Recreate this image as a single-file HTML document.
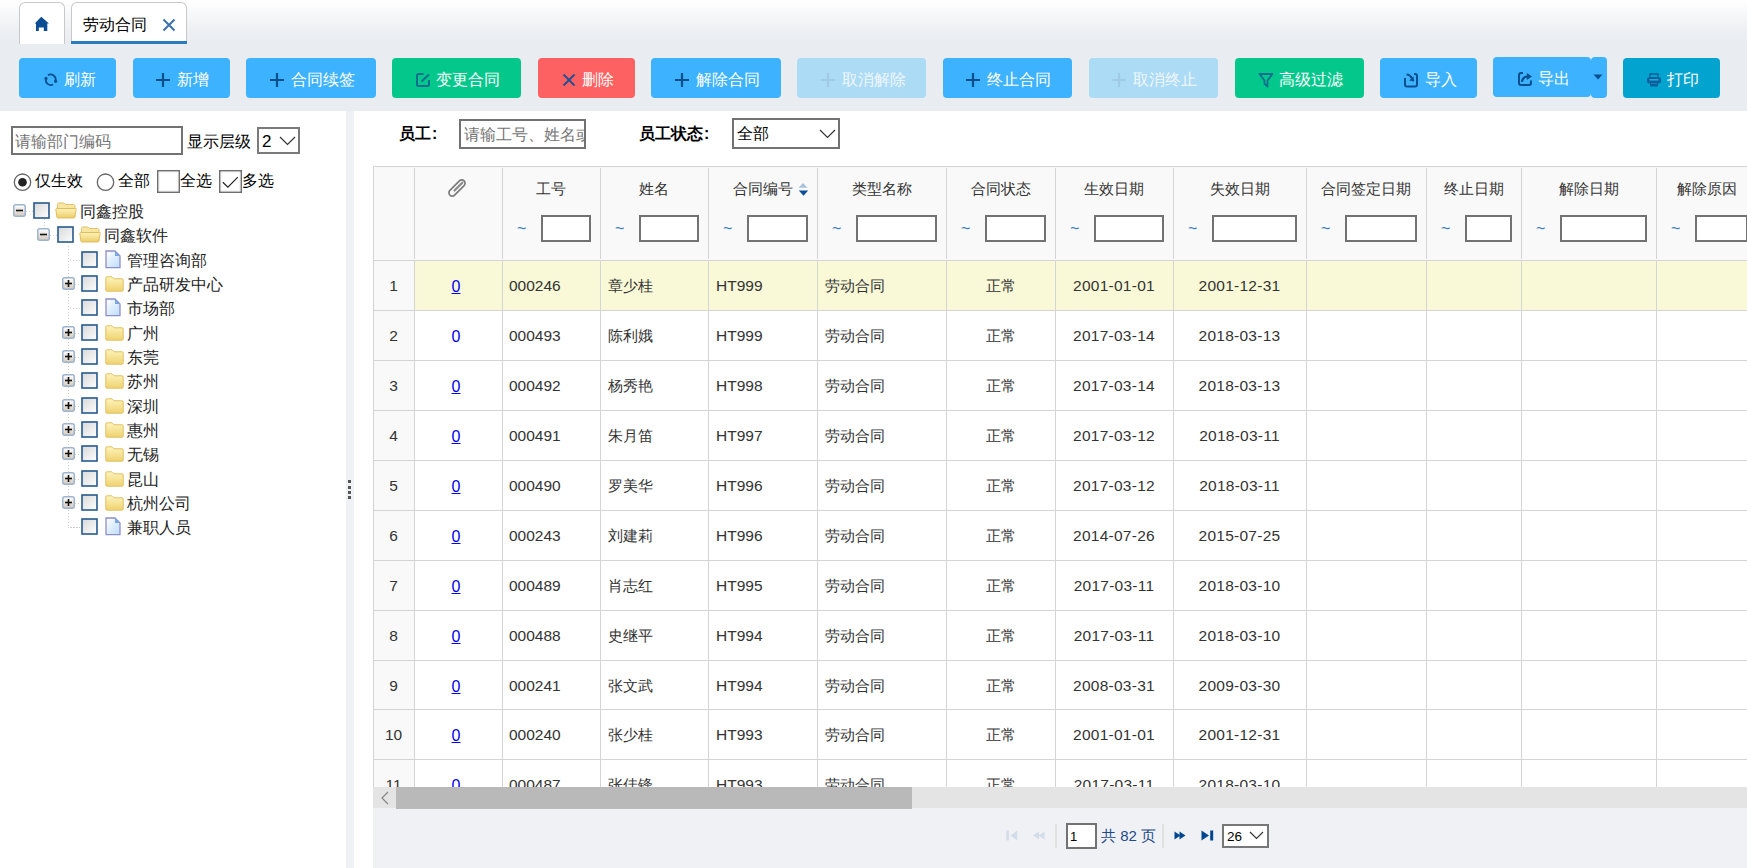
<!DOCTYPE html><html><head><meta charset="utf-8"><style>
*{box-sizing:border-box}
html,body{margin:0;padding:0}
body{width:1747px;height:868px;overflow:hidden;position:relative;background:#fff;font-family:"Liberation Sans",sans-serif;color:#333}
.a{position:absolute;white-space:nowrap}
.t16{font-size:16px;line-height:20px}
.t15{font-size:15px;line-height:20px}
.btn{position:absolute;top:58px;height:40px;border-radius:4px}
.btxt{position:absolute;top:14px;font-size:16px;line-height:20px;color:#fff;white-space:nowrap}
.bic{position:absolute;top:0}
.inp{position:absolute;border:2px solid #727272;background:#fff}
.vl{position:absolute;width:1px;background:#d4d4d4}
.hl{position:absolute;height:1px;background:#d4d4d4}
</style></head><body>

<div class="a" style="left:0;top:0;width:1747px;height:44px;background:linear-gradient(#ffffff 0%,#f7f8fa 30%,#eef0f3 65%,#e9edf1 95%)"></div>
<div class="a" style="left:0;top:44px;width:1747px;height:67px;background:#e9edf1"></div>
<div class="a" style="left:19px;top:2px;width:46px;height:42px;background:#fff;border:1px solid #c8c8c8;border-bottom:none;border-radius:6px 6px 0 0"></div>
<svg class="a" style="left:34px;top:16px" width="16" height="16" viewBox="0 0 16 16"><path d="M7.3 0.7 L0.7 7.5 L2 7.5 L2 14.9 L4.8 14.9 L4.8 11.6 L9.8 11.6 L9.8 14.9 L13.3 14.9 L13.3 7.5 L14.9 7.5 Z" fill="#0a4d94"/></svg>
<div class="a" style="left:71px;top:2px;width:116px;height:42px;background:#fff;border:1px solid #c8c8c8;border-bottom:none;border-radius:6px 6px 0 0"></div>
<div class="a" style="left:71px;top:41px;width:116px;height:3px;background:#2b7bbf"></div>
<div class="a t16" style="left:83px;top:15px;color:#000">劳动合同</div>
<svg class="a" style="left:162px;top:18px" width="14" height="14" viewBox="0 0 14 14"><path d="M1.5 1.5 L12.5 12.5 M12.5 1.5 L1.5 12.5" stroke="#3a72b0" stroke-width="2"/></svg>
<div class="btn" style="left:19px;width:97px;top:58px;background:#3db2fe"></div>
<div class="a" style="left:43px;top:72px;width:16px;height:16px"><svg width="16" height="16" viewBox="0 0 16 16"><path d="M4.9 3.2 A5.2 5.2 0 0 1 12.6 8.9" stroke="#0c4f8e" stroke-width="1.7" fill="none"/><path d="M10.1 12.6 A5.2 5.2 0 0 1 2.9 6.6" stroke="#0c4f8e" stroke-width="1.7" fill="none"/><circle cx="12.6" cy="9.3" r="1.6" fill="#0c4f8e"/><circle cx="3" cy="6.4" r="1.6" fill="#0c4f8e"/></svg></div>
<div class="a t16" style="left:64px;top:70px;color:#fff">刷新</div>
<div class="btn" style="left:133px;width:97px;top:58px;background:#3db2fe"></div>
<div class="a" style="left:155px;top:72px;width:16px;height:16px"><svg width="16" height="16" viewBox="0 0 16 16"><path d="M8 1 V15 M1 8 H15" stroke="#0d4f8b" stroke-width="2.2"/></svg></div>
<div class="a t16" style="left:177px;top:70px;color:#fff">新增</div>
<div class="btn" style="left:246px;width:130px;top:58px;background:#3db2fe"></div>
<div class="a" style="left:269px;top:72px;width:16px;height:16px"><svg width="16" height="16" viewBox="0 0 16 16"><path d="M8 1 V15 M1 8 H15" stroke="#0d4f8b" stroke-width="2.2"/></svg></div>
<div class="a t16" style="left:291px;top:70px;color:#fff">合同续签</div>
<div class="btn" style="left:392px;width:129px;top:58px;background:#04c88b"></div>
<div class="a" style="left:415px;top:72px;width:16px;height:16px"><svg width="16" height="16" viewBox="0 0 16 16"><path d="M8.5 2 H3.5 Q2 2 2 3.5 V12.5 Q2 14 3.5 14 H12.5 Q14 14 14 12.5 V8" stroke="#0a6e8e" stroke-width="2" fill="none"/><path d="M6.5 9.5 L14 2.5" stroke="#0a6e8e" stroke-width="1.8"/></svg></div>
<div class="a t16" style="left:436px;top:70px;color:#fff">变更合同</div>
<div class="btn" style="left:538px;width:97px;top:58px;background:#fe6161"></div>
<div class="a" style="left:561px;top:72px;width:16px;height:16px"><svg width="16" height="16" viewBox="0 0 16 16"><path d="M2.5 2.5 L13.5 13.5 M13.5 2.5 L2.5 13.5" stroke="#1f4f93" stroke-width="1.8"/></svg></div>
<div class="a t16" style="left:582px;top:70px;color:#fff">删除</div>
<div class="btn" style="left:651px;width:130px;top:58px;background:#3db2fe"></div>
<div class="a" style="left:674px;top:72px;width:16px;height:16px"><svg width="16" height="16" viewBox="0 0 16 16"><path d="M8 1 V15 M1 8 H15" stroke="#0d4f8b" stroke-width="2.2"/></svg></div>
<div class="a t16" style="left:696px;top:70px;color:#fff">解除合同</div>
<div class="btn" style="left:797px;width:129px;top:58px;background:#acdbf6"></div>
<div class="a" style="left:820px;top:72px;width:16px;height:16px"><svg width="16" height="16" viewBox="0 0 16 16"><path d="M8 1 V15 M1 8 H15" stroke="#9fcbe8" stroke-width="2.2"/></svg></div>
<div class="a t16" style="left:842px;top:70px;color:#f0f7fc">取消解除</div>
<div class="btn" style="left:943px;width:129px;top:58px;background:#3db2fe"></div>
<div class="a" style="left:965px;top:72px;width:16px;height:16px"><svg width="16" height="16" viewBox="0 0 16 16"><path d="M8 1 V15 M1 8 H15" stroke="#0d4f8b" stroke-width="2.2"/></svg></div>
<div class="a t16" style="left:987px;top:70px;color:#fff">终止合同</div>
<div class="btn" style="left:1089px;width:129px;top:58px;background:#acdbf6"></div>
<div class="a" style="left:1111px;top:72px;width:16px;height:16px"><svg width="16" height="16" viewBox="0 0 16 16"><path d="M8 1 V15 M1 8 H15" stroke="#9fcbe8" stroke-width="2.2"/></svg></div>
<div class="a t16" style="left:1133px;top:70px;color:#f0f7fc">取消终止</div>
<div class="btn" style="left:1235px;width:129px;top:58px;background:#04c88b"></div>
<div class="a" style="left:1258px;top:72px;width:16px;height:16px"><svg width="16" height="16" viewBox="0 0 16 16"><path d="M1.5 2 H14.5 L9.5 8.5 V14.5 L6.5 11.5 V8.5 Z" stroke="#0b6f8f" stroke-width="1.8" fill="none" stroke-linejoin="round"/></svg></div>
<div class="a t16" style="left:1279px;top:70px;color:#fff">高级过滤</div>
<div class="btn" style="left:1380px;width:97px;top:58px;background:#3db2fe"></div>
<div class="a" style="left:1403px;top:72px;width:16px;height:16px"><svg width="16" height="16" viewBox="0 0 16 16"><path d="M2 6 V12.5 Q2 14.5 4 14.5 H12 Q14 14.5 14 12.5 V4 Q14 2 12 2 H11" stroke="#0c4f8e" stroke-width="2" fill="none"/><path d="M3.5 2.5 Q7 2.5 9 6.5" stroke="#0c4f8e" stroke-width="2.2" fill="none"/><path d="M6.2 8.5 L11.2 9.6 L10.5 4.4 Z" fill="#0c4f8e"/></svg></div>
<div class="a t16" style="left:1425px;top:70px;color:#fff">导入</div>
<div class="btn" style="left:1493px;width:98px;top:57px;background:#3db2fe"></div>
<div class="a" style="left:1517px;top:71px;width:16px;height:16px"><svg width="16" height="16" viewBox="0 0 16 16"><path d="M6 2 H4 Q2 2 2 4 V12 Q2 14 4 14 H12 Q14 14 14 12 V9.5" stroke="#0c4f8e" stroke-width="2" fill="none"/><path d="M4.8 10.8 Q6 5.5 10.5 5.5" stroke="#0c4f8e" stroke-width="2.2" fill="none"/><path d="M9.8 2 L15 5.5 L9.8 9 Z" fill="#0c4f8e"/></svg></div>
<div class="a t16" style="left:1538px;top:69px;color:#fff">导出</div>
<div class="btn" style="left:1623px;width:97px;top:58px;background:#03a3d0"></div>
<div class="a" style="left:1646px;top:72px;width:16px;height:16px"><svg width="16" height="16" viewBox="0 0 16 16"><path d="M4 4.5 V2 H12 V4.5" stroke="#07619c" stroke-width="1.6" fill="none"/><rect x="1" y="5" width="14" height="6.5" rx="2.5" fill="#07619c"/><rect x="3.5" y="7" width="9" height="1.6" fill="#2aa6d6"/><rect x="4" y="9.5" width="8" height="5" fill="#07619c"/><rect x="5" y="11" width="6" height="1" fill="#1b7db8"/></svg></div>
<div class="a t16" style="left:1667px;top:70px;color:#fff">打印</div>
<div class="a" style="left:1591px;top:57px;width:16px;height:41px;background:#3db2fe;border-radius:4px"></div>
<svg class="a" style="left:1593px;top:74px" width="10" height="6" viewBox="0 0 10 6"><path d="M0.5 0.5 H9.5 L5 5.5Z" fill="#0c4f8e"/></svg>
<div class="inp" style="left:11px;top:126px;width:172px;height:29px"></div>
<div class="a t16" style="left:15px;top:132px;color:#757575">请输部门编码</div>
<div class="a t16" style="left:187px;top:132px;color:#000">显示层级</div>
<div class="inp" style="left:257px;top:127px;width:43px;height:27px;border-color:#7a7a7a"></div>
<div class="a" style="left:262px;top:132px;font-size:17px;line-height:20px;color:#000">2</div>
<svg class="a" style="left:279px;top:135.5px" width="17" height="10" viewBox="0 0 17 10"><path d="M1 1 L8.5 8.5 L16 1" stroke="#333" stroke-width="1.2" fill="none"/></svg>
<svg class="a" style="left:13px;top:173px" width="19" height="19" viewBox="0 0 19 19"><circle cx="9.5" cy="9.2" r="8.2" fill="#fff" stroke="#666" stroke-width="1.3"/><circle cx="9.5" cy="9.2" r="4.3" fill="#222"/></svg>
<div class="a t16" style="left:35px;top:171px;color:#000">仅生效</div>
<svg class="a" style="left:95.5px;top:173px" width="19" height="19" viewBox="0 0 19 19"><circle cx="9.5" cy="9.2" r="8.2" fill="#fff" stroke="#666" stroke-width="1.3"/></svg>
<div class="a t16" style="left:118px;top:171px;color:#000">全部</div>
<svg class="a" style="left:157px;top:170px" width="23" height="23" viewBox="0 0 23 23"><rect x="0.8" y="0.8" width="21.4" height="21.4" fill="#fff" stroke="#6e6e6e" stroke-width="1.6"/><rect x="2" y="2" width="19" height="19" fill="none" stroke="#e6e6e6" stroke-width="0.8"/></svg>
<div class="a t16" style="left:180px;top:171px;color:#000">全选</div>
<svg class="a" style="left:219px;top:170px" width="23" height="23" viewBox="0 0 23 23"><rect x="0.8" y="0.8" width="21.4" height="21.4" fill="#fff" stroke="#6e6e6e" stroke-width="1.6"/><rect x="2" y="2" width="19" height="19" fill="none" stroke="#e6e6e6" stroke-width="0.8"/></svg>
<svg class="a" style="left:219px;top:170px" width="23" height="23" viewBox="0 0 23 23"><path d="M3.8 12.2 L8.9 17.2 L18.8 7.2" stroke="#222" stroke-width="1.2" fill="none"/></svg>
<div class="a t16" style="left:242px;top:171px;color:#000">多选</div>
<div class="a" style="left:44px;top:219px;width:1px;height:9px;background:repeating-linear-gradient(#cfcfcf 0 1px,transparent 1px 3px)"></div>
<div class="a" style="left:68px;top:246px;width:1px;height:282px;background:repeating-linear-gradient(#cfcfcf 0 1px,transparent 1px 3px)"></div>
<div class="a" style="left:68px;top:527px;width:12px;height:1px;background:repeating-linear-gradient(90deg,#cfcfcf 0 1px,transparent 1px 3px)"></div>
<div class="a" style="left:26px;top:211px;width:7px;height:1px;background:repeating-linear-gradient(90deg,#cfcfcf 0 1px,transparent 1px 3px)"></div>
<svg class="a" style="left:13px;top:204px" width="13" height="13" viewBox="0 0 13 13"><defs><linearGradient id="eg" x1="0" y1="0" x2="0" y2="1"><stop offset="0" stop-color="#fff"/><stop offset="1" stop-color="#d3c9bd"/></linearGradient></defs><rect x="0.75" y="0.75" width="11.5" height="11.5" rx="2" fill="url(#eg)" stroke="#9db4cf" stroke-width="1.5"/><path d="M3 6.5 H10" stroke="#111" stroke-width="1.6"/></svg>
<svg class="a" style="left:33px;top:202px" width="17" height="17" viewBox="0 0 17 17"><defs><linearGradient id="cg" x1="0" y1="0" x2="1" y2="1"><stop offset="0" stop-color="#d8d8d8"/><stop offset="1" stop-color="#fefefe"/></linearGradient></defs><rect x="1" y="1" width="15" height="15" fill="url(#cg)" stroke="#275a8c" stroke-width="1.6"/></svg>
<svg class="a" style="left:55px;top:202px" width="22" height="17" viewBox="0 0 22 17"><defs><linearGradient id="fo" x1="0" y1="0" x2="0" y2="1"><stop offset="0" stop-color="#fdf3b8"/><stop offset="1" stop-color="#eccd6a"/></linearGradient></defs><path d="M2.5 2.5 Q2.5 1 4 1 H9 L10.5 2.5 H18.5 Q20 2.5 20 4 V15 H2.5Z" fill="#f7e6a0" stroke="#e3c26c" stroke-width="1"/><path d="M0.8 7.5 Q0.8 6.5 2 6.5 H20.5 Q21.5 6.5 21.2 7.5 L19.6 15.5 Q19.4 16 18.8 16 H2.8 Q2.2 16 2 15.4Z" fill="url(#fo)" stroke="#e0bd5e" stroke-width="1"/></svg>
<div class="a t16" style="left:80px;top:202px;color:#222">同鑫控股</div>
<div class="a" style="left:50px;top:235px;width:7px;height:1px;background:repeating-linear-gradient(90deg,#cfcfcf 0 1px,transparent 1px 3px)"></div>
<svg class="a" style="left:37px;top:228px" width="13" height="13" viewBox="0 0 13 13"><defs><linearGradient id="eg" x1="0" y1="0" x2="0" y2="1"><stop offset="0" stop-color="#fff"/><stop offset="1" stop-color="#d3c9bd"/></linearGradient></defs><rect x="0.75" y="0.75" width="11.5" height="11.5" rx="2" fill="url(#eg)" stroke="#9db4cf" stroke-width="1.5"/><path d="M3 6.5 H10" stroke="#111" stroke-width="1.6"/></svg>
<svg class="a" style="left:57px;top:226px" width="17" height="17" viewBox="0 0 17 17"><defs><linearGradient id="cg" x1="0" y1="0" x2="1" y2="1"><stop offset="0" stop-color="#d8d8d8"/><stop offset="1" stop-color="#fefefe"/></linearGradient></defs><rect x="1" y="1" width="15" height="15" fill="url(#cg)" stroke="#275a8c" stroke-width="1.6"/></svg>
<svg class="a" style="left:79px;top:226px" width="22" height="17" viewBox="0 0 22 17"><defs><linearGradient id="fo" x1="0" y1="0" x2="0" y2="1"><stop offset="0" stop-color="#fdf3b8"/><stop offset="1" stop-color="#eccd6a"/></linearGradient></defs><path d="M2.5 2.5 Q2.5 1 4 1 H9 L10.5 2.5 H18.5 Q20 2.5 20 4 V15 H2.5Z" fill="#f7e6a0" stroke="#e3c26c" stroke-width="1"/><path d="M0.8 7.5 Q0.8 6.5 2 6.5 H20.5 Q21.5 6.5 21.2 7.5 L19.6 15.5 Q19.4 16 18.8 16 H2.8 Q2.2 16 2 15.4Z" fill="url(#fo)" stroke="#e0bd5e" stroke-width="1"/></svg>
<div class="a t16" style="left:104px;top:226px;color:#222">同鑫软件</div>
<div class="a" style="left:70px;top:260px;width:10px;height:1px;background:repeating-linear-gradient(90deg,#cfcfcf 0 1px,transparent 1px 3px)"></div>
<svg class="a" style="left:81px;top:251px" width="17" height="17" viewBox="0 0 17 17"><defs><linearGradient id="cg" x1="0" y1="0" x2="1" y2="1"><stop offset="0" stop-color="#d8d8d8"/><stop offset="1" stop-color="#fefefe"/></linearGradient></defs><rect x="1" y="1" width="15" height="15" fill="url(#cg)" stroke="#275a8c" stroke-width="1.6"/></svg>
<svg class="a" style="left:105px;top:250px" width="16" height="19" viewBox="0 0 16 19"><defs><linearGradient id="fi" x1="0" y1="0" x2="1" y2="1"><stop offset="0" stop-color="#ffffff"/><stop offset="1" stop-color="#bcdcfb"/></linearGradient></defs><path d="M1 1 H10 L15 6 V17.6 H1Z" fill="url(#fi)" stroke="#8d8fc9" stroke-width="1.3"/><path d="M10 1 V6 H15Z" fill="#7aa7e0"/></svg>
<div class="a t16" style="left:127px;top:251px;color:#222">管理咨询部</div>
<div class="a" style="left:75px;top:284px;width:5px;height:1px;background:repeating-linear-gradient(90deg,#cfcfcf 0 1px,transparent 1px 3px)"></div>
<svg class="a" style="left:62px;top:277px" width="13" height="13" viewBox="0 0 13 13"><defs><linearGradient id="eg" x1="0" y1="0" x2="0" y2="1"><stop offset="0" stop-color="#fff"/><stop offset="1" stop-color="#d3c9bd"/></linearGradient></defs><rect x="0.75" y="0.75" width="11.5" height="11.5" rx="2" fill="url(#eg)" stroke="#9db4cf" stroke-width="1.5"/><path d="M3 6.5 H10" stroke="#111" stroke-width="1.6"/><path d="M6.5 3 V10" stroke="#111" stroke-width="1.6"/></svg>
<svg class="a" style="left:81px;top:275px" width="17" height="17" viewBox="0 0 17 17"><defs><linearGradient id="cg" x1="0" y1="0" x2="1" y2="1"><stop offset="0" stop-color="#d8d8d8"/><stop offset="1" stop-color="#fefefe"/></linearGradient></defs><rect x="1" y="1" width="15" height="15" fill="url(#cg)" stroke="#275a8c" stroke-width="1.6"/></svg>
<svg class="a" style="left:105px;top:276px" width="19" height="16" viewBox="0 0 19 16"><defs><linearGradient id="fc" x1="0" y1="0" x2="0" y2="1"><stop offset="0" stop-color="#fdf4bd"/><stop offset="1" stop-color="#efd26f"/></linearGradient></defs><path d="M0.8 2 Q0.8 0.8 2 0.8 H7 L9 2.8 H17 Q18.2 2.8 18.2 4 V14 Q18.2 15.2 17 15.2 H2 Q0.8 15.2 0.8 14Z" fill="url(#fc)" stroke="#e2c160" stroke-width="1"/></svg>
<div class="a t16" style="left:127px;top:275px;color:#222">产品研发中心</div>
<div class="a" style="left:70px;top:308px;width:10px;height:1px;background:repeating-linear-gradient(90deg,#cfcfcf 0 1px,transparent 1px 3px)"></div>
<svg class="a" style="left:81px;top:299px" width="17" height="17" viewBox="0 0 17 17"><defs><linearGradient id="cg" x1="0" y1="0" x2="1" y2="1"><stop offset="0" stop-color="#d8d8d8"/><stop offset="1" stop-color="#fefefe"/></linearGradient></defs><rect x="1" y="1" width="15" height="15" fill="url(#cg)" stroke="#275a8c" stroke-width="1.6"/></svg>
<svg class="a" style="left:105px;top:298px" width="16" height="19" viewBox="0 0 16 19"><defs><linearGradient id="fi" x1="0" y1="0" x2="1" y2="1"><stop offset="0" stop-color="#ffffff"/><stop offset="1" stop-color="#bcdcfb"/></linearGradient></defs><path d="M1 1 H10 L15 6 V17.6 H1Z" fill="url(#fi)" stroke="#8d8fc9" stroke-width="1.3"/><path d="M10 1 V6 H15Z" fill="#7aa7e0"/></svg>
<div class="a t16" style="left:127px;top:299px;color:#222">市场部</div>
<div class="a" style="left:75px;top:333px;width:5px;height:1px;background:repeating-linear-gradient(90deg,#cfcfcf 0 1px,transparent 1px 3px)"></div>
<svg class="a" style="left:62px;top:326px" width="13" height="13" viewBox="0 0 13 13"><defs><linearGradient id="eg" x1="0" y1="0" x2="0" y2="1"><stop offset="0" stop-color="#fff"/><stop offset="1" stop-color="#d3c9bd"/></linearGradient></defs><rect x="0.75" y="0.75" width="11.5" height="11.5" rx="2" fill="url(#eg)" stroke="#9db4cf" stroke-width="1.5"/><path d="M3 6.5 H10" stroke="#111" stroke-width="1.6"/><path d="M6.5 3 V10" stroke="#111" stroke-width="1.6"/></svg>
<svg class="a" style="left:81px;top:324px" width="17" height="17" viewBox="0 0 17 17"><defs><linearGradient id="cg" x1="0" y1="0" x2="1" y2="1"><stop offset="0" stop-color="#d8d8d8"/><stop offset="1" stop-color="#fefefe"/></linearGradient></defs><rect x="1" y="1" width="15" height="15" fill="url(#cg)" stroke="#275a8c" stroke-width="1.6"/></svg>
<svg class="a" style="left:105px;top:325px" width="19" height="16" viewBox="0 0 19 16"><defs><linearGradient id="fc" x1="0" y1="0" x2="0" y2="1"><stop offset="0" stop-color="#fdf4bd"/><stop offset="1" stop-color="#efd26f"/></linearGradient></defs><path d="M0.8 2 Q0.8 0.8 2 0.8 H7 L9 2.8 H17 Q18.2 2.8 18.2 4 V14 Q18.2 15.2 17 15.2 H2 Q0.8 15.2 0.8 14Z" fill="url(#fc)" stroke="#e2c160" stroke-width="1"/></svg>
<div class="a t16" style="left:127px;top:324px;color:#222">广州</div>
<div class="a" style="left:75px;top:357px;width:5px;height:1px;background:repeating-linear-gradient(90deg,#cfcfcf 0 1px,transparent 1px 3px)"></div>
<svg class="a" style="left:62px;top:350px" width="13" height="13" viewBox="0 0 13 13"><defs><linearGradient id="eg" x1="0" y1="0" x2="0" y2="1"><stop offset="0" stop-color="#fff"/><stop offset="1" stop-color="#d3c9bd"/></linearGradient></defs><rect x="0.75" y="0.75" width="11.5" height="11.5" rx="2" fill="url(#eg)" stroke="#9db4cf" stroke-width="1.5"/><path d="M3 6.5 H10" stroke="#111" stroke-width="1.6"/><path d="M6.5 3 V10" stroke="#111" stroke-width="1.6"/></svg>
<svg class="a" style="left:81px;top:348px" width="17" height="17" viewBox="0 0 17 17"><defs><linearGradient id="cg" x1="0" y1="0" x2="1" y2="1"><stop offset="0" stop-color="#d8d8d8"/><stop offset="1" stop-color="#fefefe"/></linearGradient></defs><rect x="1" y="1" width="15" height="15" fill="url(#cg)" stroke="#275a8c" stroke-width="1.6"/></svg>
<svg class="a" style="left:105px;top:349px" width="19" height="16" viewBox="0 0 19 16"><defs><linearGradient id="fc" x1="0" y1="0" x2="0" y2="1"><stop offset="0" stop-color="#fdf4bd"/><stop offset="1" stop-color="#efd26f"/></linearGradient></defs><path d="M0.8 2 Q0.8 0.8 2 0.8 H7 L9 2.8 H17 Q18.2 2.8 18.2 4 V14 Q18.2 15.2 17 15.2 H2 Q0.8 15.2 0.8 14Z" fill="url(#fc)" stroke="#e2c160" stroke-width="1"/></svg>
<div class="a t16" style="left:127px;top:348px;color:#222">东莞</div>
<div class="a" style="left:75px;top:381px;width:5px;height:1px;background:repeating-linear-gradient(90deg,#cfcfcf 0 1px,transparent 1px 3px)"></div>
<svg class="a" style="left:62px;top:374px" width="13" height="13" viewBox="0 0 13 13"><defs><linearGradient id="eg" x1="0" y1="0" x2="0" y2="1"><stop offset="0" stop-color="#fff"/><stop offset="1" stop-color="#d3c9bd"/></linearGradient></defs><rect x="0.75" y="0.75" width="11.5" height="11.5" rx="2" fill="url(#eg)" stroke="#9db4cf" stroke-width="1.5"/><path d="M3 6.5 H10" stroke="#111" stroke-width="1.6"/><path d="M6.5 3 V10" stroke="#111" stroke-width="1.6"/></svg>
<svg class="a" style="left:81px;top:372px" width="17" height="17" viewBox="0 0 17 17"><defs><linearGradient id="cg" x1="0" y1="0" x2="1" y2="1"><stop offset="0" stop-color="#d8d8d8"/><stop offset="1" stop-color="#fefefe"/></linearGradient></defs><rect x="1" y="1" width="15" height="15" fill="url(#cg)" stroke="#275a8c" stroke-width="1.6"/></svg>
<svg class="a" style="left:105px;top:373px" width="19" height="16" viewBox="0 0 19 16"><defs><linearGradient id="fc" x1="0" y1="0" x2="0" y2="1"><stop offset="0" stop-color="#fdf4bd"/><stop offset="1" stop-color="#efd26f"/></linearGradient></defs><path d="M0.8 2 Q0.8 0.8 2 0.8 H7 L9 2.8 H17 Q18.2 2.8 18.2 4 V14 Q18.2 15.2 17 15.2 H2 Q0.8 15.2 0.8 14Z" fill="url(#fc)" stroke="#e2c160" stroke-width="1"/></svg>
<div class="a t16" style="left:127px;top:372px;color:#222">苏州</div>
<div class="a" style="left:75px;top:406px;width:5px;height:1px;background:repeating-linear-gradient(90deg,#cfcfcf 0 1px,transparent 1px 3px)"></div>
<svg class="a" style="left:62px;top:399px" width="13" height="13" viewBox="0 0 13 13"><defs><linearGradient id="eg" x1="0" y1="0" x2="0" y2="1"><stop offset="0" stop-color="#fff"/><stop offset="1" stop-color="#d3c9bd"/></linearGradient></defs><rect x="0.75" y="0.75" width="11.5" height="11.5" rx="2" fill="url(#eg)" stroke="#9db4cf" stroke-width="1.5"/><path d="M3 6.5 H10" stroke="#111" stroke-width="1.6"/><path d="M6.5 3 V10" stroke="#111" stroke-width="1.6"/></svg>
<svg class="a" style="left:81px;top:397px" width="17" height="17" viewBox="0 0 17 17"><defs><linearGradient id="cg" x1="0" y1="0" x2="1" y2="1"><stop offset="0" stop-color="#d8d8d8"/><stop offset="1" stop-color="#fefefe"/></linearGradient></defs><rect x="1" y="1" width="15" height="15" fill="url(#cg)" stroke="#275a8c" stroke-width="1.6"/></svg>
<svg class="a" style="left:105px;top:398px" width="19" height="16" viewBox="0 0 19 16"><defs><linearGradient id="fc" x1="0" y1="0" x2="0" y2="1"><stop offset="0" stop-color="#fdf4bd"/><stop offset="1" stop-color="#efd26f"/></linearGradient></defs><path d="M0.8 2 Q0.8 0.8 2 0.8 H7 L9 2.8 H17 Q18.2 2.8 18.2 4 V14 Q18.2 15.2 17 15.2 H2 Q0.8 15.2 0.8 14Z" fill="url(#fc)" stroke="#e2c160" stroke-width="1"/></svg>
<div class="a t16" style="left:127px;top:397px;color:#222">深圳</div>
<div class="a" style="left:75px;top:430px;width:5px;height:1px;background:repeating-linear-gradient(90deg,#cfcfcf 0 1px,transparent 1px 3px)"></div>
<svg class="a" style="left:62px;top:423px" width="13" height="13" viewBox="0 0 13 13"><defs><linearGradient id="eg" x1="0" y1="0" x2="0" y2="1"><stop offset="0" stop-color="#fff"/><stop offset="1" stop-color="#d3c9bd"/></linearGradient></defs><rect x="0.75" y="0.75" width="11.5" height="11.5" rx="2" fill="url(#eg)" stroke="#9db4cf" stroke-width="1.5"/><path d="M3 6.5 H10" stroke="#111" stroke-width="1.6"/><path d="M6.5 3 V10" stroke="#111" stroke-width="1.6"/></svg>
<svg class="a" style="left:81px;top:421px" width="17" height="17" viewBox="0 0 17 17"><defs><linearGradient id="cg" x1="0" y1="0" x2="1" y2="1"><stop offset="0" stop-color="#d8d8d8"/><stop offset="1" stop-color="#fefefe"/></linearGradient></defs><rect x="1" y="1" width="15" height="15" fill="url(#cg)" stroke="#275a8c" stroke-width="1.6"/></svg>
<svg class="a" style="left:105px;top:422px" width="19" height="16" viewBox="0 0 19 16"><defs><linearGradient id="fc" x1="0" y1="0" x2="0" y2="1"><stop offset="0" stop-color="#fdf4bd"/><stop offset="1" stop-color="#efd26f"/></linearGradient></defs><path d="M0.8 2 Q0.8 0.8 2 0.8 H7 L9 2.8 H17 Q18.2 2.8 18.2 4 V14 Q18.2 15.2 17 15.2 H2 Q0.8 15.2 0.8 14Z" fill="url(#fc)" stroke="#e2c160" stroke-width="1"/></svg>
<div class="a t16" style="left:127px;top:421px;color:#222">惠州</div>
<div class="a" style="left:75px;top:454px;width:5px;height:1px;background:repeating-linear-gradient(90deg,#cfcfcf 0 1px,transparent 1px 3px)"></div>
<svg class="a" style="left:62px;top:447px" width="13" height="13" viewBox="0 0 13 13"><defs><linearGradient id="eg" x1="0" y1="0" x2="0" y2="1"><stop offset="0" stop-color="#fff"/><stop offset="1" stop-color="#d3c9bd"/></linearGradient></defs><rect x="0.75" y="0.75" width="11.5" height="11.5" rx="2" fill="url(#eg)" stroke="#9db4cf" stroke-width="1.5"/><path d="M3 6.5 H10" stroke="#111" stroke-width="1.6"/><path d="M6.5 3 V10" stroke="#111" stroke-width="1.6"/></svg>
<svg class="a" style="left:81px;top:445px" width="17" height="17" viewBox="0 0 17 17"><defs><linearGradient id="cg" x1="0" y1="0" x2="1" y2="1"><stop offset="0" stop-color="#d8d8d8"/><stop offset="1" stop-color="#fefefe"/></linearGradient></defs><rect x="1" y="1" width="15" height="15" fill="url(#cg)" stroke="#275a8c" stroke-width="1.6"/></svg>
<svg class="a" style="left:105px;top:446px" width="19" height="16" viewBox="0 0 19 16"><defs><linearGradient id="fc" x1="0" y1="0" x2="0" y2="1"><stop offset="0" stop-color="#fdf4bd"/><stop offset="1" stop-color="#efd26f"/></linearGradient></defs><path d="M0.8 2 Q0.8 0.8 2 0.8 H7 L9 2.8 H17 Q18.2 2.8 18.2 4 V14 Q18.2 15.2 17 15.2 H2 Q0.8 15.2 0.8 14Z" fill="url(#fc)" stroke="#e2c160" stroke-width="1"/></svg>
<div class="a t16" style="left:127px;top:445px;color:#222">无锡</div>
<div class="a" style="left:75px;top:479px;width:5px;height:1px;background:repeating-linear-gradient(90deg,#cfcfcf 0 1px,transparent 1px 3px)"></div>
<svg class="a" style="left:62px;top:472px" width="13" height="13" viewBox="0 0 13 13"><defs><linearGradient id="eg" x1="0" y1="0" x2="0" y2="1"><stop offset="0" stop-color="#fff"/><stop offset="1" stop-color="#d3c9bd"/></linearGradient></defs><rect x="0.75" y="0.75" width="11.5" height="11.5" rx="2" fill="url(#eg)" stroke="#9db4cf" stroke-width="1.5"/><path d="M3 6.5 H10" stroke="#111" stroke-width="1.6"/><path d="M6.5 3 V10" stroke="#111" stroke-width="1.6"/></svg>
<svg class="a" style="left:81px;top:470px" width="17" height="17" viewBox="0 0 17 17"><defs><linearGradient id="cg" x1="0" y1="0" x2="1" y2="1"><stop offset="0" stop-color="#d8d8d8"/><stop offset="1" stop-color="#fefefe"/></linearGradient></defs><rect x="1" y="1" width="15" height="15" fill="url(#cg)" stroke="#275a8c" stroke-width="1.6"/></svg>
<svg class="a" style="left:105px;top:471px" width="19" height="16" viewBox="0 0 19 16"><defs><linearGradient id="fc" x1="0" y1="0" x2="0" y2="1"><stop offset="0" stop-color="#fdf4bd"/><stop offset="1" stop-color="#efd26f"/></linearGradient></defs><path d="M0.8 2 Q0.8 0.8 2 0.8 H7 L9 2.8 H17 Q18.2 2.8 18.2 4 V14 Q18.2 15.2 17 15.2 H2 Q0.8 15.2 0.8 14Z" fill="url(#fc)" stroke="#e2c160" stroke-width="1"/></svg>
<div class="a t16" style="left:127px;top:470px;color:#222">昆山</div>
<div class="a" style="left:75px;top:503px;width:5px;height:1px;background:repeating-linear-gradient(90deg,#cfcfcf 0 1px,transparent 1px 3px)"></div>
<svg class="a" style="left:62px;top:496px" width="13" height="13" viewBox="0 0 13 13"><defs><linearGradient id="eg" x1="0" y1="0" x2="0" y2="1"><stop offset="0" stop-color="#fff"/><stop offset="1" stop-color="#d3c9bd"/></linearGradient></defs><rect x="0.75" y="0.75" width="11.5" height="11.5" rx="2" fill="url(#eg)" stroke="#9db4cf" stroke-width="1.5"/><path d="M3 6.5 H10" stroke="#111" stroke-width="1.6"/><path d="M6.5 3 V10" stroke="#111" stroke-width="1.6"/></svg>
<svg class="a" style="left:81px;top:494px" width="17" height="17" viewBox="0 0 17 17"><defs><linearGradient id="cg" x1="0" y1="0" x2="1" y2="1"><stop offset="0" stop-color="#d8d8d8"/><stop offset="1" stop-color="#fefefe"/></linearGradient></defs><rect x="1" y="1" width="15" height="15" fill="url(#cg)" stroke="#275a8c" stroke-width="1.6"/></svg>
<svg class="a" style="left:105px;top:495px" width="19" height="16" viewBox="0 0 19 16"><defs><linearGradient id="fc" x1="0" y1="0" x2="0" y2="1"><stop offset="0" stop-color="#fdf4bd"/><stop offset="1" stop-color="#efd26f"/></linearGradient></defs><path d="M0.8 2 Q0.8 0.8 2 0.8 H7 L9 2.8 H17 Q18.2 2.8 18.2 4 V14 Q18.2 15.2 17 15.2 H2 Q0.8 15.2 0.8 14Z" fill="url(#fc)" stroke="#e2c160" stroke-width="1"/></svg>
<div class="a t16" style="left:127px;top:494px;color:#222">杭州公司</div>
<div class="a" style="left:70px;top:527px;width:10px;height:1px;background:repeating-linear-gradient(90deg,#cfcfcf 0 1px,transparent 1px 3px)"></div>
<svg class="a" style="left:81px;top:518px" width="17" height="17" viewBox="0 0 17 17"><defs><linearGradient id="cg" x1="0" y1="0" x2="1" y2="1"><stop offset="0" stop-color="#d8d8d8"/><stop offset="1" stop-color="#fefefe"/></linearGradient></defs><rect x="1" y="1" width="15" height="15" fill="url(#cg)" stroke="#275a8c" stroke-width="1.6"/></svg>
<svg class="a" style="left:105px;top:517px" width="16" height="19" viewBox="0 0 16 19"><defs><linearGradient id="fi" x1="0" y1="0" x2="1" y2="1"><stop offset="0" stop-color="#ffffff"/><stop offset="1" stop-color="#bcdcfb"/></linearGradient></defs><path d="M1 1 H10 L15 6 V17.6 H1Z" fill="url(#fi)" stroke="#8d8fc9" stroke-width="1.3"/><path d="M10 1 V6 H15Z" fill="#7aa7e0"/></svg>
<div class="a t16" style="left:127px;top:518px;color:#222">兼职人员</div>
<div class="a" style="left:346px;top:111px;width:8px;height:757px;background:#eff1f5"></div>
<div class="a" style="left:348px;top:480px;width:3px;height:3px;background:#555"></div>
<div class="a" style="left:348px;top:486px;width:3px;height:3px;background:#555"></div>
<div class="a" style="left:348px;top:491px;width:3px;height:3px;background:#555"></div>
<div class="a" style="left:348px;top:496px;width:3px;height:3px;background:#555"></div>
<div class="a" style="left:399px;top:124px;font-size:16px;line-height:20px;font-weight:bold;color:#000">员工</div>
<div class="a" style="left:432px;top:124px;font-size:16px;line-height:20px;font-weight:bold;color:#000">:</div>
<div class="inp" style="left:459px;top:119px;width:127px;height:30px;overflow:hidden"><div class="a t16" style="left:3px;top:4px;color:#757575">请输工号、姓名或</div></div>
<div class="a" style="left:639px;top:124px;font-size:16px;line-height:20px;font-weight:bold;color:#000">员工状态</div>
<div class="a" style="left:704px;top:124px;font-size:16px;line-height:20px;font-weight:bold;color:#000">:</div>
<div class="inp" style="left:732px;top:118px;width:108px;height:31px"></div>
<div class="a t16" style="left:737px;top:124px;color:#000">全部</div>
<svg class="a" style="left:819px;top:128.5px" width="17" height="10" viewBox="0 0 17 10"><path d="M1 1 L8.5 8.5 L16 1" stroke="#333" stroke-width="1.2" fill="none"/></svg>
<div class="a" style="left:373px;top:166px;width:1374px;height:94px;background:#f9f9f9"></div>
<div class="a" style="left:414px;top:261px;width:1333px;height:49px;background:#f9f9d7"></div>
<div class="a" style="left:373px;top:260px;width:41px;height:527px;background:#f9f9f9"></div>
<div class="hl" style="left:373px;top:166px;width:1374px"></div>
<div class="hl" style="left:373px;top:260px;width:1374px"></div>
<div class="hl" style="left:373px;top:310px;width:1374px"></div>
<div class="hl" style="left:373px;top:360px;width:1374px"></div>
<div class="hl" style="left:373px;top:410px;width:1374px"></div>
<div class="hl" style="left:373px;top:460px;width:1374px"></div>
<div class="hl" style="left:373px;top:510px;width:1374px"></div>
<div class="hl" style="left:373px;top:560px;width:1374px"></div>
<div class="hl" style="left:373px;top:610px;width:1374px"></div>
<div class="hl" style="left:373px;top:660px;width:1374px"></div>
<div class="hl" style="left:373px;top:709px;width:1374px"></div>
<div class="hl" style="left:373px;top:759px;width:1374px"></div>
<div class="vl" style="left:373px;top:166px;height:621px"></div>
<div class="vl" style="left:414px;top:168px;height:91px"></div>
<div class="vl" style="left:414px;top:260px;height:527px"></div>
<div class="vl" style="left:502px;top:168px;height:91px"></div>
<div class="vl" style="left:502px;top:260px;height:527px"></div>
<div class="vl" style="left:600px;top:168px;height:91px"></div>
<div class="vl" style="left:600px;top:260px;height:527px"></div>
<div class="vl" style="left:708px;top:168px;height:91px"></div>
<div class="vl" style="left:708px;top:260px;height:527px"></div>
<div class="vl" style="left:817px;top:168px;height:91px"></div>
<div class="vl" style="left:817px;top:260px;height:527px"></div>
<div class="vl" style="left:946px;top:168px;height:91px"></div>
<div class="vl" style="left:946px;top:260px;height:527px"></div>
<div class="vl" style="left:1055px;top:168px;height:91px"></div>
<div class="vl" style="left:1055px;top:260px;height:527px"></div>
<div class="vl" style="left:1173px;top:168px;height:91px"></div>
<div class="vl" style="left:1173px;top:260px;height:527px"></div>
<div class="vl" style="left:1306px;top:168px;height:91px"></div>
<div class="vl" style="left:1306px;top:260px;height:527px"></div>
<div class="vl" style="left:1426px;top:168px;height:91px"></div>
<div class="vl" style="left:1426px;top:260px;height:527px"></div>
<div class="vl" style="left:1521px;top:168px;height:91px"></div>
<div class="vl" style="left:1521px;top:260px;height:527px"></div>
<div class="vl" style="left:1656px;top:168px;height:91px"></div>
<div class="vl" style="left:1656px;top:260px;height:527px"></div>
<div class="vl" style="left:1757px;top:168px;height:91px"></div>
<div class="vl" style="left:1757px;top:260px;height:527px"></div>
<div class="a" style="left:351.0px;top:179px;width:400px;text-align:center;font-size:15px;line-height:20px;color:#333;">工号</div>
<div class="a" style="left:517px;top:219px;font-size:16px;line-height:20px;color:#2f7bc4">~</div>
<div class="inp" style="left:541px;top:215px;width:50px;height:27px"></div>
<div class="a" style="left:454.0px;top:179px;width:400px;text-align:center;font-size:15px;line-height:20px;color:#333;">姓名</div>
<div class="a" style="left:615px;top:219px;font-size:16px;line-height:20px;color:#2f7bc4">~</div>
<div class="inp" style="left:639px;top:215px;width:60px;height:27px"></div>
<div class="a" style="left:562.5px;top:179px;width:400px;text-align:center;font-size:15px;line-height:20px;color:#333;">合同编号</div>
<div class="a" style="left:723px;top:219px;font-size:16px;line-height:20px;color:#2f7bc4">~</div>
<div class="inp" style="left:747px;top:215px;width:61px;height:27px"></div>
<div class="a" style="left:681.5px;top:179px;width:400px;text-align:center;font-size:15px;line-height:20px;color:#333;">类型名称</div>
<div class="a" style="left:832px;top:219px;font-size:16px;line-height:20px;color:#2f7bc4">~</div>
<div class="inp" style="left:856px;top:215px;width:81px;height:27px"></div>
<div class="a" style="left:800.5px;top:179px;width:400px;text-align:center;font-size:15px;line-height:20px;color:#333;">合同状态</div>
<div class="a" style="left:961px;top:219px;font-size:16px;line-height:20px;color:#2f7bc4">~</div>
<div class="inp" style="left:985px;top:215px;width:61px;height:27px"></div>
<div class="a" style="left:914.0px;top:179px;width:400px;text-align:center;font-size:15px;line-height:20px;color:#333;">生效日期</div>
<div class="a" style="left:1070px;top:219px;font-size:16px;line-height:20px;color:#2f7bc4">~</div>
<div class="inp" style="left:1094px;top:215px;width:70px;height:27px"></div>
<div class="a" style="left:1039.5px;top:179px;width:400px;text-align:center;font-size:15px;line-height:20px;color:#333;">失效日期</div>
<div class="a" style="left:1188px;top:219px;font-size:16px;line-height:20px;color:#2f7bc4">~</div>
<div class="inp" style="left:1212px;top:215px;width:85px;height:27px"></div>
<div class="a" style="left:1166.0px;top:179px;width:400px;text-align:center;font-size:15px;line-height:20px;color:#333;">合同签定日期</div>
<div class="a" style="left:1321px;top:219px;font-size:16px;line-height:20px;color:#2f7bc4">~</div>
<div class="inp" style="left:1345px;top:215px;width:72px;height:27px"></div>
<div class="a" style="left:1273.5px;top:179px;width:400px;text-align:center;font-size:15px;line-height:20px;color:#333;">终止日期</div>
<div class="a" style="left:1441px;top:219px;font-size:16px;line-height:20px;color:#2f7bc4">~</div>
<div class="inp" style="left:1465px;top:215px;width:47px;height:27px"></div>
<div class="a" style="left:1388.5px;top:179px;width:400px;text-align:center;font-size:15px;line-height:20px;color:#333;">解除日期</div>
<div class="a" style="left:1536px;top:219px;font-size:16px;line-height:20px;color:#2f7bc4">~</div>
<div class="inp" style="left:1560px;top:215px;width:87px;height:27px"></div>
<div class="a" style="left:1506.5px;top:179px;width:400px;text-align:center;font-size:15px;line-height:20px;color:#333;">解除原因</div>
<div class="a" style="left:1671px;top:219px;font-size:16px;line-height:20px;color:#2f7bc4">~</div>
<div class="inp" style="left:1695px;top:215px;width:53px;height:27px"></div>
<svg class="a" style="left:798px;top:182px" width="11" height="15" viewBox="0 0 11 15"><path d="M0.5 5.8 L5 1 L9.5 5.8Z" fill="#a9c1de"/><path d="M0.8 8.6 H10.2 L5.5 13.8Z" fill="#0b4f9a"/></svg>
<svg class="a" style="left:446px;top:177px" width="22" height="22" viewBox="-11 -11 22 22"><g transform="rotate(45)"><rect x="-3.3" y="-10" width="6.6" height="20" rx="3.3" fill="none" stroke="#7b7b7b" stroke-width="1.7"/><path d="M0 -7.5 V3.5" stroke="#8a8a8a" stroke-width="2.2" stroke-linecap="round"/></g></svg>
<div class="a" style="left:373px;top:261px;width:1374px;height:526px;overflow:hidden">
<div class="a" style="left:-179.5px;top:15px;width:400px;text-align:center;font-size:15.5px;line-height:20px;color:#333;">1</div>
<div class="a" style="left:-117.0px;top:16px;width:400px;text-align:center;font-size:16px;line-height:20px;color:#0000f0;text-decoration:underline;">0</div>
<div class="a" style="left:136px;top:15px;font-size:15.5px;line-height:20px">000246</div>
<div class="a" style="left:235px;top:15px;font-size:15px;line-height:20px">章少桂</div>
<div class="a" style="left:343px;top:15px;font-size:15.5px;line-height:20px">HT999</div>
<div class="a" style="left:452px;top:15px;font-size:15px;line-height:20px">劳动合同</div>
<div class="a" style="left:427.5px;top:15px;width:400px;text-align:center;font-size:15px;line-height:20px;color:#333;">正常</div>
<div class="a" style="left:541.0px;top:15px;width:400px;text-align:center;font-size:15.5px;line-height:20px;color:#333;letter-spacing:0.25px;">2001-01-01</div>
<div class="a" style="left:666.5px;top:15px;width:400px;text-align:center;font-size:15.5px;line-height:20px;color:#333;letter-spacing:0.25px;">2001-12-31</div>
<div class="a" style="left:-179.5px;top:65px;width:400px;text-align:center;font-size:15.5px;line-height:20px;color:#333;">2</div>
<div class="a" style="left:-117.0px;top:66px;width:400px;text-align:center;font-size:16px;line-height:20px;color:#0000f0;">0</div>
<div class="a" style="left:136px;top:65px;font-size:15.5px;line-height:20px">000493</div>
<div class="a" style="left:235px;top:65px;font-size:15px;line-height:20px">陈利娥</div>
<div class="a" style="left:343px;top:65px;font-size:15.5px;line-height:20px">HT999</div>
<div class="a" style="left:452px;top:65px;font-size:15px;line-height:20px">劳动合同</div>
<div class="a" style="left:427.5px;top:65px;width:400px;text-align:center;font-size:15px;line-height:20px;color:#333;">正常</div>
<div class="a" style="left:541.0px;top:65px;width:400px;text-align:center;font-size:15.5px;line-height:20px;color:#333;letter-spacing:0.25px;">2017-03-14</div>
<div class="a" style="left:666.5px;top:65px;width:400px;text-align:center;font-size:15.5px;line-height:20px;color:#333;letter-spacing:0.25px;">2018-03-13</div>
<div class="a" style="left:-179.5px;top:115px;width:400px;text-align:center;font-size:15.5px;line-height:20px;color:#333;">3</div>
<div class="a" style="left:-117.0px;top:116px;width:400px;text-align:center;font-size:16px;line-height:20px;color:#0000f0;text-decoration:underline;">0</div>
<div class="a" style="left:136px;top:115px;font-size:15.5px;line-height:20px">000492</div>
<div class="a" style="left:235px;top:115px;font-size:15px;line-height:20px">杨秀艳</div>
<div class="a" style="left:343px;top:115px;font-size:15.5px;line-height:20px">HT998</div>
<div class="a" style="left:452px;top:115px;font-size:15px;line-height:20px">劳动合同</div>
<div class="a" style="left:427.5px;top:115px;width:400px;text-align:center;font-size:15px;line-height:20px;color:#333;">正常</div>
<div class="a" style="left:541.0px;top:115px;width:400px;text-align:center;font-size:15.5px;line-height:20px;color:#333;letter-spacing:0.25px;">2017-03-14</div>
<div class="a" style="left:666.5px;top:115px;width:400px;text-align:center;font-size:15.5px;line-height:20px;color:#333;letter-spacing:0.25px;">2018-03-13</div>
<div class="a" style="left:-179.5px;top:165px;width:400px;text-align:center;font-size:15.5px;line-height:20px;color:#333;">4</div>
<div class="a" style="left:-117.0px;top:166px;width:400px;text-align:center;font-size:16px;line-height:20px;color:#0000f0;text-decoration:underline;">0</div>
<div class="a" style="left:136px;top:165px;font-size:15.5px;line-height:20px">000491</div>
<div class="a" style="left:235px;top:165px;font-size:15px;line-height:20px">朱月笛</div>
<div class="a" style="left:343px;top:165px;font-size:15.5px;line-height:20px">HT997</div>
<div class="a" style="left:452px;top:165px;font-size:15px;line-height:20px">劳动合同</div>
<div class="a" style="left:427.5px;top:165px;width:400px;text-align:center;font-size:15px;line-height:20px;color:#333;">正常</div>
<div class="a" style="left:541.0px;top:165px;width:400px;text-align:center;font-size:15.5px;line-height:20px;color:#333;letter-spacing:0.25px;">2017-03-12</div>
<div class="a" style="left:666.5px;top:165px;width:400px;text-align:center;font-size:15.5px;line-height:20px;color:#333;letter-spacing:0.25px;">2018-03-11</div>
<div class="a" style="left:-179.5px;top:215px;width:400px;text-align:center;font-size:15.5px;line-height:20px;color:#333;">5</div>
<div class="a" style="left:-117.0px;top:216px;width:400px;text-align:center;font-size:16px;line-height:20px;color:#0000f0;text-decoration:underline;">0</div>
<div class="a" style="left:136px;top:215px;font-size:15.5px;line-height:20px">000490</div>
<div class="a" style="left:235px;top:215px;font-size:15px;line-height:20px">罗美华</div>
<div class="a" style="left:343px;top:215px;font-size:15.5px;line-height:20px">HT996</div>
<div class="a" style="left:452px;top:215px;font-size:15px;line-height:20px">劳动合同</div>
<div class="a" style="left:427.5px;top:215px;width:400px;text-align:center;font-size:15px;line-height:20px;color:#333;">正常</div>
<div class="a" style="left:541.0px;top:215px;width:400px;text-align:center;font-size:15.5px;line-height:20px;color:#333;letter-spacing:0.25px;">2017-03-12</div>
<div class="a" style="left:666.5px;top:215px;width:400px;text-align:center;font-size:15.5px;line-height:20px;color:#333;letter-spacing:0.25px;">2018-03-11</div>
<div class="a" style="left:-179.5px;top:265px;width:400px;text-align:center;font-size:15.5px;line-height:20px;color:#333;">6</div>
<div class="a" style="left:-117.0px;top:266px;width:400px;text-align:center;font-size:16px;line-height:20px;color:#0000f0;text-decoration:underline;">0</div>
<div class="a" style="left:136px;top:265px;font-size:15.5px;line-height:20px">000243</div>
<div class="a" style="left:235px;top:265px;font-size:15px;line-height:20px">刘建莉</div>
<div class="a" style="left:343px;top:265px;font-size:15.5px;line-height:20px">HT996</div>
<div class="a" style="left:452px;top:265px;font-size:15px;line-height:20px">劳动合同</div>
<div class="a" style="left:427.5px;top:265px;width:400px;text-align:center;font-size:15px;line-height:20px;color:#333;">正常</div>
<div class="a" style="left:541.0px;top:265px;width:400px;text-align:center;font-size:15.5px;line-height:20px;color:#333;letter-spacing:0.25px;">2014-07-26</div>
<div class="a" style="left:666.5px;top:265px;width:400px;text-align:center;font-size:15.5px;line-height:20px;color:#333;letter-spacing:0.25px;">2015-07-25</div>
<div class="a" style="left:-179.5px;top:315px;width:400px;text-align:center;font-size:15.5px;line-height:20px;color:#333;">7</div>
<div class="a" style="left:-117.0px;top:316px;width:400px;text-align:center;font-size:16px;line-height:20px;color:#0000f0;text-decoration:underline;">0</div>
<div class="a" style="left:136px;top:315px;font-size:15.5px;line-height:20px">000489</div>
<div class="a" style="left:235px;top:315px;font-size:15px;line-height:20px">肖志红</div>
<div class="a" style="left:343px;top:315px;font-size:15.5px;line-height:20px">HT995</div>
<div class="a" style="left:452px;top:315px;font-size:15px;line-height:20px">劳动合同</div>
<div class="a" style="left:427.5px;top:315px;width:400px;text-align:center;font-size:15px;line-height:20px;color:#333;">正常</div>
<div class="a" style="left:541.0px;top:315px;width:400px;text-align:center;font-size:15.5px;line-height:20px;color:#333;letter-spacing:0.25px;">2017-03-11</div>
<div class="a" style="left:666.5px;top:315px;width:400px;text-align:center;font-size:15.5px;line-height:20px;color:#333;letter-spacing:0.25px;">2018-03-10</div>
<div class="a" style="left:-179.5px;top:365px;width:400px;text-align:center;font-size:15.5px;line-height:20px;color:#333;">8</div>
<div class="a" style="left:-117.0px;top:366px;width:400px;text-align:center;font-size:16px;line-height:20px;color:#0000f0;text-decoration:underline;">0</div>
<div class="a" style="left:136px;top:365px;font-size:15.5px;line-height:20px">000488</div>
<div class="a" style="left:235px;top:365px;font-size:15px;line-height:20px">史继平</div>
<div class="a" style="left:343px;top:365px;font-size:15.5px;line-height:20px">HT994</div>
<div class="a" style="left:452px;top:365px;font-size:15px;line-height:20px">劳动合同</div>
<div class="a" style="left:427.5px;top:365px;width:400px;text-align:center;font-size:15px;line-height:20px;color:#333;">正常</div>
<div class="a" style="left:541.0px;top:365px;width:400px;text-align:center;font-size:15.5px;line-height:20px;color:#333;letter-spacing:0.25px;">2017-03-11</div>
<div class="a" style="left:666.5px;top:365px;width:400px;text-align:center;font-size:15.5px;line-height:20px;color:#333;letter-spacing:0.25px;">2018-03-10</div>
<div class="a" style="left:-179.5px;top:415px;width:400px;text-align:center;font-size:15.5px;line-height:20px;color:#333;">9</div>
<div class="a" style="left:-117.0px;top:416px;width:400px;text-align:center;font-size:16px;line-height:20px;color:#0000f0;text-decoration:underline;">0</div>
<div class="a" style="left:136px;top:415px;font-size:15.5px;line-height:20px">000241</div>
<div class="a" style="left:235px;top:415px;font-size:15px;line-height:20px">张文武</div>
<div class="a" style="left:343px;top:415px;font-size:15.5px;line-height:20px">HT994</div>
<div class="a" style="left:452px;top:415px;font-size:15px;line-height:20px">劳动合同</div>
<div class="a" style="left:427.5px;top:415px;width:400px;text-align:center;font-size:15px;line-height:20px;color:#333;">正常</div>
<div class="a" style="left:541.0px;top:415px;width:400px;text-align:center;font-size:15.5px;line-height:20px;color:#333;letter-spacing:0.25px;">2008-03-31</div>
<div class="a" style="left:666.5px;top:415px;width:400px;text-align:center;font-size:15.5px;line-height:20px;color:#333;letter-spacing:0.25px;">2009-03-30</div>
<div class="a" style="left:-179.5px;top:464px;width:400px;text-align:center;font-size:15.5px;line-height:20px;color:#333;">10</div>
<div class="a" style="left:-117.0px;top:465px;width:400px;text-align:center;font-size:16px;line-height:20px;color:#0000f0;text-decoration:underline;">0</div>
<div class="a" style="left:136px;top:464px;font-size:15.5px;line-height:20px">000240</div>
<div class="a" style="left:235px;top:464px;font-size:15px;line-height:20px">张少桂</div>
<div class="a" style="left:343px;top:464px;font-size:15.5px;line-height:20px">HT993</div>
<div class="a" style="left:452px;top:464px;font-size:15px;line-height:20px">劳动合同</div>
<div class="a" style="left:427.5px;top:464px;width:400px;text-align:center;font-size:15px;line-height:20px;color:#333;">正常</div>
<div class="a" style="left:541.0px;top:464px;width:400px;text-align:center;font-size:15.5px;line-height:20px;color:#333;letter-spacing:0.25px;">2001-01-01</div>
<div class="a" style="left:666.5px;top:464px;width:400px;text-align:center;font-size:15.5px;line-height:20px;color:#333;letter-spacing:0.25px;">2001-12-31</div>
<div class="a" style="left:-179.5px;top:514px;width:400px;text-align:center;font-size:15.5px;line-height:20px;color:#333;">11</div>
<div class="a" style="left:-117.0px;top:515px;width:400px;text-align:center;font-size:16px;line-height:20px;color:#0000f0;text-decoration:underline;">0</div>
<div class="a" style="left:136px;top:514px;font-size:15.5px;line-height:20px">000487</div>
<div class="a" style="left:235px;top:514px;font-size:15px;line-height:20px">张佳锋</div>
<div class="a" style="left:343px;top:514px;font-size:15.5px;line-height:20px">HT993</div>
<div class="a" style="left:452px;top:514px;font-size:15px;line-height:20px">劳动合同</div>
<div class="a" style="left:427.5px;top:514px;width:400px;text-align:center;font-size:15px;line-height:20px;color:#333;">正常</div>
<div class="a" style="left:541.0px;top:514px;width:400px;text-align:center;font-size:15.5px;line-height:20px;color:#333;letter-spacing:0.25px;">2017-03-11</div>
<div class="a" style="left:666.5px;top:514px;width:400px;text-align:center;font-size:15.5px;line-height:20px;color:#333;letter-spacing:0.25px;">2018-03-10</div>
</div>
<div class="a" style="left:373px;top:808px;width:1374px;height:60px;background:#f0f1f5"></div>
<div class="a" style="left:373px;top:787px;width:1374px;height:21px;background:#e4e4e4"></div>
<div class="a" style="left:396px;top:787px;width:516px;height:22px;background:#b9b9b9"></div>
<svg class="a" style="left:378px;top:790px" width="14" height="16" viewBox="0 0 14 16"><path d="M10 2 L4 8 L10 14" stroke="#888" stroke-width="1.2" fill="none"/></svg>
<svg class="a" style="left:1006px;top:830px" width="12" height="11" viewBox="0 0 12 11"><rect x="0.3" y="0.5" width="2.6" height="10" fill="#d3dce8"/><path d="M4.5 5.5 L11.2 0.5 V10.5Z" fill="#d3dce8"/></svg>
<svg class="a" style="left:1033px;top:831px" width="12" height="9" viewBox="0 0 12 9"><path d="M0 4.5 L6 0.5 V8.5Z M5.5 4.5 L11.5 0.5 V8.5Z" fill="#d3dce8"/></svg>
<div class="a" style="left:1055px;top:824px;width:2px;height:24px;background:#e0e0e0"></div>
<div class="inp" style="left:1066px;top:823px;width:31px;height:26px"></div>
<div class="a" style="left:1070px;top:827px;font-size:13px;line-height:20px;color:#000">1</div>
<div class="a" style="left:1101px;top:826px;font-size:15px;line-height:20px;color:#1f4a8a">共 82 页</div>
<div class="a" style="left:1162px;top:824px;width:2px;height:24px;background:#e0e0e0"></div>
<svg class="a" style="left:1174px;top:831px" width="12" height="9" viewBox="0 0 12 9"><path d="M0.5 0.5 L6.5 4.5 L0.5 8.5Z M5.5 0.5 L11.5 4.5 L5.5 8.5Z" fill="#00478f"/></svg>
<svg class="a" style="left:1201px;top:830px" width="13" height="11" viewBox="0 0 13 11"><path d="M0.5 0.5 L8 5.5 L0.5 10.5Z" fill="#00478f"/><rect x="9.2" y="0.5" width="3" height="10" fill="#00478f"/></svg>
<div class="inp" style="left:1222px;top:824px;width:47px;height:24px;border-color:#777"></div>
<div class="a" style="left:1227px;top:827px;font-size:13.5px;line-height:20px;color:#000">26</div>
<svg class="a" style="left:1249px;top:831px" width="15" height="9" viewBox="0 0 15 9"><path d="M1 1 L7.5 7.5 L14 1" stroke="#333" stroke-width="1.2" fill="none"/></svg>
</body></html>
